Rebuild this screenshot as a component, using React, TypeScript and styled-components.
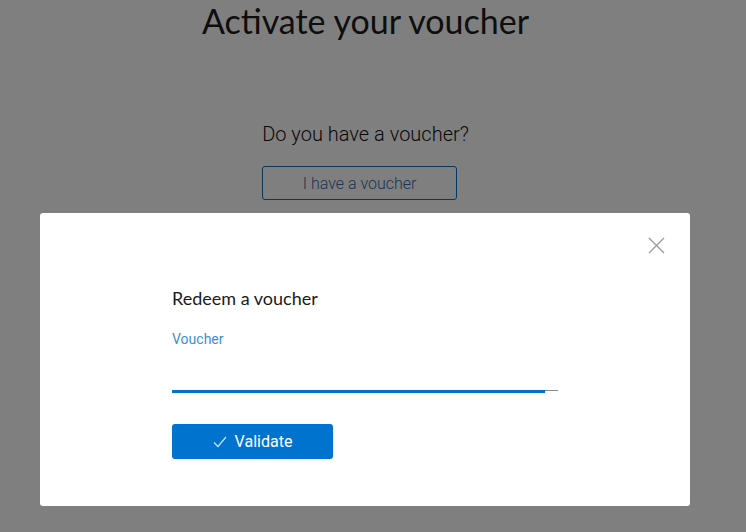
import React from "react";
import styled, { createGlobalStyle } from "styled-components";

const GlobalStyle = createGlobalStyle`
  html, body {
    margin: 0;
    padding: 0;
    background: #ffffff;
    overflow: hidden;
  }
  body {
    font-family: Roboto, "Liberation Sans", sans-serif;
  }
`;

const Page = styled.div`
  width: 731px;
  height: 532px;
  display: flex;
  flex-direction: column;
  align-items: center;
`;

const Title = styled.h1`
  margin: 1px 0 0;
  font-family: Lato, "Noto Sans", sans-serif;
  font-weight: 400;
  font-size: 34px;
  line-height: 40px;
  color: #1c1c1c;
`;

const Question = styled.section`
  margin-top: 81px;
  display: flex;
  flex-direction: column;
  align-items: flex-start;
`;

const QuestionText = styled.p`
  margin: 0;
  font-size: 20px;
  font-weight: 300;
  line-height: 24px;
  color: #111111;
`;

const OutlineButton = styled.button`
  margin-top: 20px;
  width: 195px;
  height: 34px;
  border: 1px solid #0a6fc0;
  border-radius: 3px;
  background: #ffffff;
  color: #3a6aa8;
  font-family: Roboto, "Liberation Sans", sans-serif;
  font-weight: 300;
  font-size: 16px;
  cursor: pointer;
`;

const Overlay = styled.div`
  position: fixed;
  inset: 0;
  background: rgba(0, 0, 0, 0.5);
`;

const Modal = styled.div`
  position: fixed;
  left: 40px;
  top: 213px;
  width: 650px;
  height: 293px;
  box-sizing: border-box;
  padding: 74px 132px 0;
  background: #ffffff;
  border-radius: 3px;
`;

const CloseButton = styled.button`
  position: absolute;
  right: 24px;
  top: 22px;
  width: 20px;
  height: 20px;
  padding: 0;
  border: 0;
  background: transparent;
  cursor: pointer;
  display: flex;
  align-items: center;
  justify-content: center;
`;

const ModalTitle = styled.h2`
  margin: 0;
  font-family: Lato, "Noto Sans", sans-serif;
  font-weight: 400;
  font-size: 18px;
  line-height: 22px;
  color: #1a1a1a;
`;

const Field = styled.label`
  margin-top: 21px;
  display: flex;
  flex-direction: column;
  width: 386px;
`;

const FieldLabel = styled.span`
  font-size: 14px;
  line-height: 18px;
  color: #3d8fd4;
`;

const InputWrap = styled.div`
  position: relative;
  margin-top: 10px;
  border-bottom: 1px solid #8a8a8a;
`;

const Input = styled.input`
  display: block;
  width: 100%;
  height: 32px;
  box-sizing: border-box;
  border: 0;
  outline: none;
  background: transparent;
  font-family: Roboto, "Liberation Sans", sans-serif;
  font-size: 16px;
  padding: 0;
`;

const FocusBar = styled.span`
  position: absolute;
  left: 0;
  bottom: -3px;
  width: 373px;
  height: 3px;
  background: #0073cf;
`;

const PrimaryButton = styled.button`
  margin-top: 33px;
  width: 161px;
  height: 35px;
  border: 0;
  border-radius: 3px;
  background: #0073cf;
  color: #ffffff;
  font-family: Roboto, "Liberation Sans", sans-serif;
  font-size: 16px;
  display: flex;
  align-items: center;
  justify-content: center;
  gap: 8px;
  cursor: pointer;
`;

export default function App() {
  return (
    <>
      <GlobalStyle />
      <Page>
        <Title>Activate your voucher</Title>
        <Question>
          <QuestionText>Do you have a voucher?</QuestionText>
          <OutlineButton>I have a voucher</OutlineButton>
        </Question>
      </Page>
      <Overlay />
      <Modal>
        <CloseButton aria-label="Close">
          <svg width="17" height="17" viewBox="0 0 17 17">
            <path d="M1 1 L16 16 M16 1 L1 16" stroke="#9a9a9a" strokeWidth="1.3" fill="none" />
          </svg>
        </CloseButton>
        <ModalTitle>Redeem a voucher</ModalTitle>
        <Field>
          <FieldLabel>Voucher</FieldLabel>
          <InputWrap>
            <Input />
            <FocusBar />
          </InputWrap>
        </Field>
        <PrimaryButton>
          <svg width="14" height="12" viewBox="0 0 14 12">
            <path d="M1 6.5 L5 10.5 L13 1" stroke="#cfe3f5" strokeWidth="1.2" fill="none" />
          </svg>
          Validate
        </PrimaryButton>
      </Modal>
    </>
  );
}
